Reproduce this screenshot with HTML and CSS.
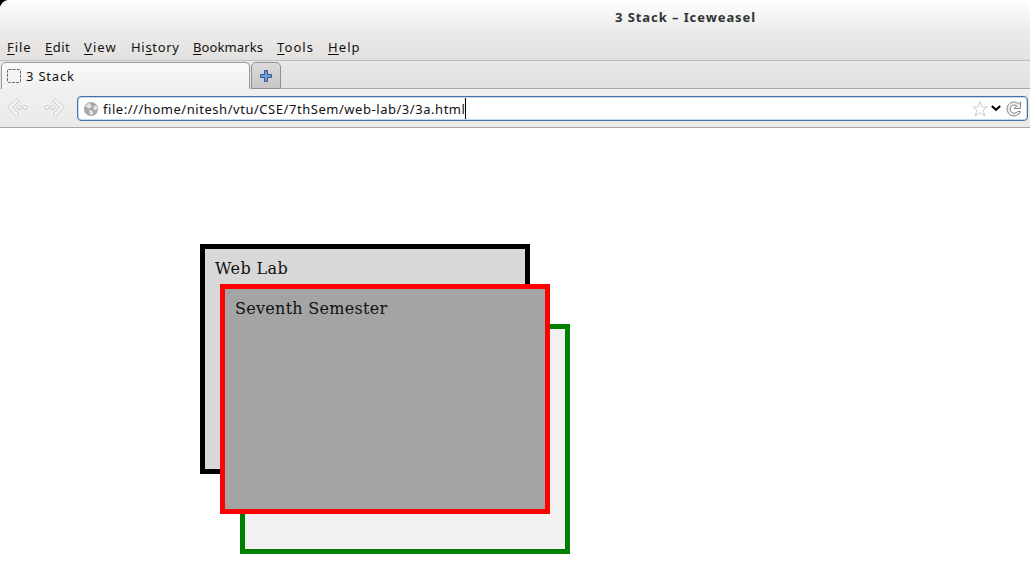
FILE: index.html
```html
<!DOCTYPE html>
<html lang="en">
<head>
<meta charset="utf-8">
<title>3 Stack</title>
<link rel="stylesheet" href="styles.css">
</head>
<body>
<div class="window">
  <header class="top">
    <div class="titlebar"><span class="title">3 Stack – Iceweasel</span></div>
    <nav class="menu">
      <span class="m-file"><u>F</u>ile</span>
      <span class="m-edit"><u>E</u>dit</span>
      <span class="m-view"><u>V</u>iew</span>
      <span class="m-history">Hi<u>s</u>tory</span>
      <span class="m-bookmarks"><u>B</u>ookmarks</span>
      <span class="m-tools"><u>T</u>ools</span>
      <span class="m-help"><u>H</u>elp</span>
    </nav>
  </header>
  <div class="tabs">
    <div class="tab">
      <svg width="14" height="14" viewBox="0 0 14 14"><rect x=".5" y=".5" width="13" height="13" rx="1" fill="none" stroke="#666" stroke-dasharray="3 1.2"/></svg>
      <span class="tab-label">3 Stack</span>
    </div>
    <div class="new-tab">
      <svg width="12" height="12" viewBox="0 0 12 12"><path d="M4.500 .5h3v4h4v3h-4v4h-3v-4h-4v-3h4z" fill="#6f9fd8" stroke="#2f5a9a" stroke-linejoin="round"/></svg>
    </div>
    <div class="strip"></div>
  </div>
  <div class="toolbar">
    <svg class="arrow" width="22" height="20" viewBox="0 0 22 20"><g fill="#f7f7f6" stroke="#cacac8"><path d="M9.500 .8 12 3 5 9.500l7 6.500-2.500 2.500L.8 9.500z"/><circle cx="12" cy="9.500" r="2"/><circle cx="18" cy="9.500" r="2"/></g></svg>
    <svg class="arrow" width="22" height="20" viewBox="0 0 22 20"><g fill="#f7f7f6" stroke="#cacac8"><path d="M11.500 .8 9 3l7 6.500-7 6.500 2.500 2.500 8.700-9z"/><circle cx="9" cy="9.500" r="2"/><circle cx="3" cy="9.500" r="2"/></g></svg>
    <div class="url">
      <svg width="14" height="14" viewBox="0 0 14 14"><circle cx="7" cy="7" r="7" fill="#a6a6a6"/><path d="M1.200 4.500 4 1.500l3-.3-.5 1.500L8 4 6.500 6 5 6.500 3 5.500zM9 5l3-2 1.300 3-1 2.500-2-.5zM5 8l3 .5 1.500 2L8 13l-2-.5z" fill="#e2e2e2"/></svg>
      <span class="address">file:///home/nitesh/vtu/CSE/7thSem/web-lab/3/3a.html</span><i class="caret"></i>
      <svg class="star" width="16" height="16" viewBox="0 0 16 16"><path d="M8 .8 10 6h5.300l-4.200 3.300 1.600 5.600L8 11.700l-4.700 3.200 1.600-5.600L.7 6H6z" fill="#fff" stroke="#ccc"/></svg>
      <svg class="down" width="10" height="7" viewBox="0 0 10 7"><path d="M.8 1 5 4.800 9.200 1" fill="none" stroke="#000" stroke-width="2"/></svg>
      <svg class="reload" width="16" height="16" viewBox="0 0 16 16"><path d="M14.500 1v6.500H8L10.700 5A4 4 0 1 0 11.500 10.500h3A7 7 0 1 1 12.700 2.800z" fill="#eee" stroke="#858782" stroke-linejoin="round"/></svg>
    </div>
  </div>
  <main class="page">
    <div class="box box-c"></div>
    <div class="box box-a"><span class="t-a">Web Lab</span></div>
    <div class="box box-b"><span class="t-b">Seventh Semester</span></div>
  </main>
</div>
</body>
</html>
```
FILE: styles.css
```css
* { box-sizing: border-box; }
body { margin: 0; background: #000; overflow: hidden; font: 13px/18px "Noto Sans", "Open Sans", sans-serif; color: #111; }
svg { display: block; flex: none; }
.window { width: 1030px; height: 578px; display: flex; flex-direction: column; background: #fff; border-top-left-radius: 9px; overflow: hidden; }
.top { height: 61px; border-bottom: 1px solid #bdbdbb; background: linear-gradient(#fff 0, #ebeae9 33px, #e2e1df 60px); }
.titlebar { height: 35px; padding: 8px 0 0 615px; font-weight: 700; color: #2e3436; letter-spacing: .92px; }
.titlebar span, .menu span, .tab-label, .address { display: block; white-space: nowrap; }
.menu { display: flex; padding: 3px 0 0 7px; }
.menu u { text-decoration: underline; text-underline-offset: 2px; text-decoration-thickness: 1px; text-decoration-skip-ink: none; }
.m-file { width: 38px; letter-spacing: .9px; }
.m-edit { width: 39px; letter-spacing: .5px; }
.m-view { width: 47px; letter-spacing: 1.1px; }
.m-history { width: 62px; letter-spacing: .7px; }
.m-bookmarks { width: 84px; letter-spacing: .1px; }
.m-tools { width: 51px; letter-spacing: 1.1px; }
.m-help { letter-spacing: 1.1px; }
.tabs { height: 28px; display: flex; background: linear-gradient(#e9e8e7, #e2e1df); }
.tab { width: 249px; height: 28px; margin: 1px 0 0 1px; padding: 0 5px 2px; display: flex; align-items: center; gap: 5px; border: 1px solid #999; border-bottom: 0; border-radius: 5px 5px 0 0; background: linear-gradient(#fafafa, #f1f0ef); }
.tab-label { letter-spacing: .8px; }
.new-tab { width: 30px; height: 27px; margin: 1px 0 0 1px; display: flex; align-items: center; justify-content: center; border: 1px solid #90908e; border-radius: 5px 5px 0 0; background: linear-gradient(#dddcdb, #c8c7c5); }
.strip { flex: 1; border-bottom: 1px solid #a5a5a3; }
.toolbar { height: 39px; display: flex; align-items: flex-start; padding: 7px 2px 0 7px; background: linear-gradient(#f1f0ef, #ebeae9); border-bottom: 1px solid #a7a7a5; }
.arrow { margin: 2px 15px 0 0; }
.arrow + .arrow { margin-right: 11px; }
.url { flex: 1; height: 25px; display: flex; align-items: center; padding: 0 4px 0 6px; border: 1px solid #4572a7; border-radius: 4px; background: #fff; box-shadow: inset 0 0 0 1px #c5d8ef; }
.address { margin-left: 5px; letter-spacing: .54px; }
.caret { width: 1px; height: 21px; background: #000; }
.star { margin-left: auto; }
.down { margin: 0 5px 0 3px; }
.reload { margin-right: 1px; }
.page { flex: 1; position: relative; background: #fff; font: 16px/20px "DejaVu Serif", serif; color: #111; }
.box { position: absolute; width: 330px; height: 230px; border: 5px solid; padding: 10px; }
.box span { display: block; color: #111; white-space: nowrap; }
.box-a { left: 200px; top: 116px; border-color: #000; background: #d8d8d8; }
.box-b { left: 220px; top: 156px; border-color: #f00; background: #a4a4a4; }
.box-c { left: 240px; top: 196px; border-color: #008000; background: #f1f1f1; }
.t-a { letter-spacing: .4px; }
.t-b { letter-spacing: .28px; }
```
